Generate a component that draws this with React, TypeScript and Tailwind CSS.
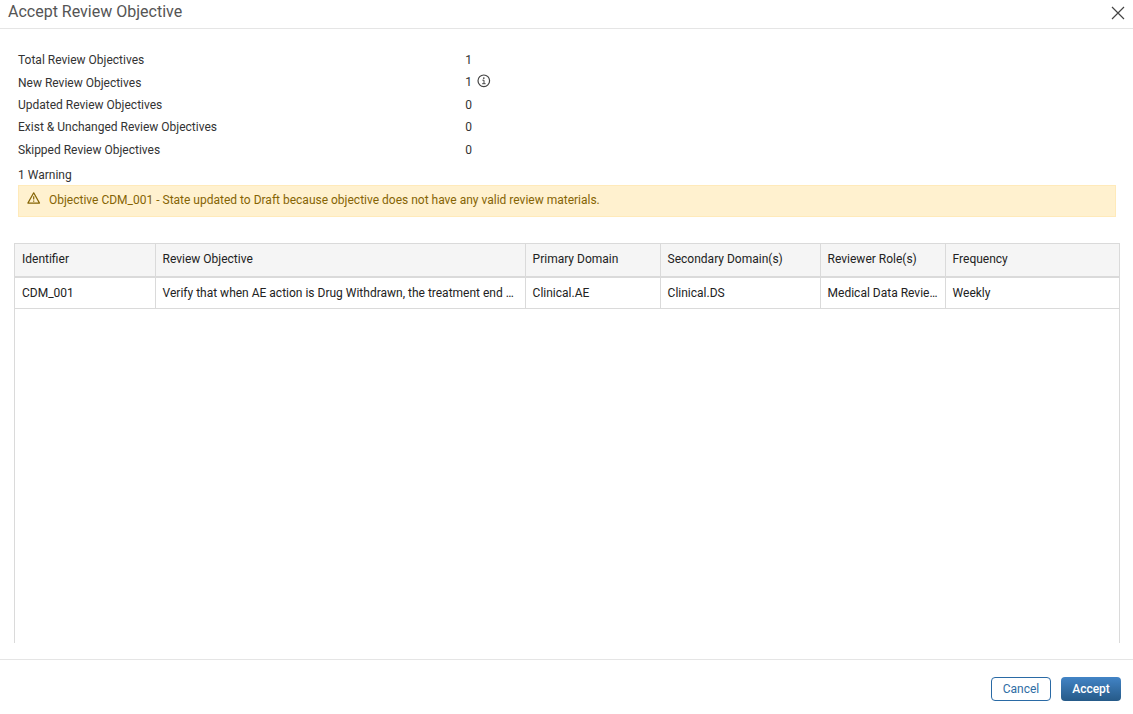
import React from "react";

const summary = [
  { label: "Total Review Objectives", value: 1 },
  { label: "New Review Objectives", value: 1, info: true },
  { label: "Updated Review Objectives", value: 0 },
  { label: "Exist & Unchanged Review Objectives", value: 0 },
  { label: "Skipped Review Objectives", value: 0 },
];

const columns = [
  "Identifier",
  "Review Objective",
  "Primary Domain",
  "Secondary Domain(s)",
  "Reviewer Role(s)",
  "Frequency",
];

const rows = [
  [
    "CDM_001",
    "Verify that when AE action is Drug Withdrawn, the treatment end …",
    "Clinical.AE",
    "Clinical.DS",
    "Medical Data Revie…",
    "Weekly",
  ],
];

const gridCols = "grid grid-cols-[141px_370px_135px_160px_125px_1fr]";

const cellClass =
  "pl-[6.6px] first:pl-[7px] leading-[30px] border-r border-[#dadada] last:border-r-0 whitespace-nowrap overflow-hidden";

const InfoIcon = () => (
  <svg
    viewBox="0 0 14 14"
    fill="none"
    stroke="#444"
    className="w-3.5 h-3.5 ml-[5px] -mt-0.5"
  >
    <circle cx="6.8" cy="6.8" r="5.8" strokeWidth="1.2" />
    <path d="M5.4 6.2h1.6v3.4M5.2 9.7h3.4" strokeWidth="1" />
    <circle cx="6.8" cy="4.1" r="0.85" fill="#444" stroke="none" />
  </svg>
);

const WarningIcon = () => (
  <svg
    viewBox="0 0 14 14"
    fill="none"
    stroke="#856404"
    strokeLinejoin="round"
    className="w-3.5 h-3.5"
  >
    <path d="M6.7 1.8 12.5 12.1H0.9z" strokeWidth="1.2" />
    <path d="M6.7 5.2v3.2M6.7 9.4v1.3" strokeWidth="1.2" />
  </svg>
);

const App = () => {
  return (
    <div className="h-screen flex flex-col bg-white text-[#333] text-xs leading-[18px] font-[Roboto,sans-serif] overflow-hidden">
      {/* Header */}
      <div className="h-[29px] shrink-0 flex items-start justify-between border-b border-[#e5e5e5] pl-2 pr-[9px]">
        <h1 className="text-base leading-6 text-[#555]">
          Accept Review Objective
        </h1>
        <button className="mt-[7px]" aria-label="Close">
          <svg
            viewBox="0 0 12 12"
            fill="none"
            stroke="#444"
            strokeWidth="1.2"
            className="w-3 h-3 overflow-visible"
          >
            <path d="M0 0 12 12M12 0 0 12" />
          </svg>
        </button>
      </div>

      {/* Summary */}
      <div className="pl-[18px] pt-5">
        {summary.map((item) => (
          <div
            key={item.label}
            className="grid grid-cols-[447.2px_1fr] items-center h-[22.4px]"
          >
            <span>{item.label}</span>
            <span
              className={
                item.info ? "flex items-center pb-[1.5px]" : "flex items-center"
              }
            >
              {item.value}
              {item.info && <InfoIcon />}
            </span>
          </div>
        ))}
      </div>

      {/* Warnings */}
      <div className="pl-[18px] pr-[17px] pt-[5px]">
        <p>1 Warning</p>
        <div className="mt-px h-8 flex items-start bg-[#fff1cf] border border-[#ffeaba] text-[#856404] pl-2 pt-[5px]">
          <WarningIcon />
          <span className="ml-2">
            Objective CDM_001 - State updated to Draft because objective does
            not have any valid review materials.
          </span>
        </div>
      </div>

      {/* Grid */}
      <div className="mt-[26px] ml-3.5 mr-[13px] h-[400px] shrink-0 border border-b-0 border-[#dadada] text-[#222]">
        <div
          className={`${gridCols} h-[34px] bg-[#f5f5f5] border-b-2 border-[#dadada]`}
        >
          {columns.map((name) => (
            <div key={name} className={cellClass}>
              {name}
            </div>
          ))}
        </div>
        {rows.map((row) => (
          <div
            key={row[0]}
            className={`${gridCols} h-[31px] border-b border-[#dadada]`}
          >
            {row.map((cell, i) => (
              <div key={i} className={cellClass}>
                {cell}
              </div>
            ))}
          </div>
        ))}
      </div>

      {/* Footer */}
      <div className="mt-4 h-[55px] shrink-0 border-t border-[#e5e5e5] flex items-start justify-end gap-2.5 pt-[17px] pr-3">
        <button className="w-[60px] h-6 rounded border border-[#2a6aa5] text-[#2e6da4] bg-white">
          Cancel
        </button>
        <button className="w-[60px] h-6 rounded bg-linear-to-b from-[#4284c6] to-[#265a88] text-white font-medium">
          Accept
        </button>
      </div>
    </div>
  );
};

export default App;
